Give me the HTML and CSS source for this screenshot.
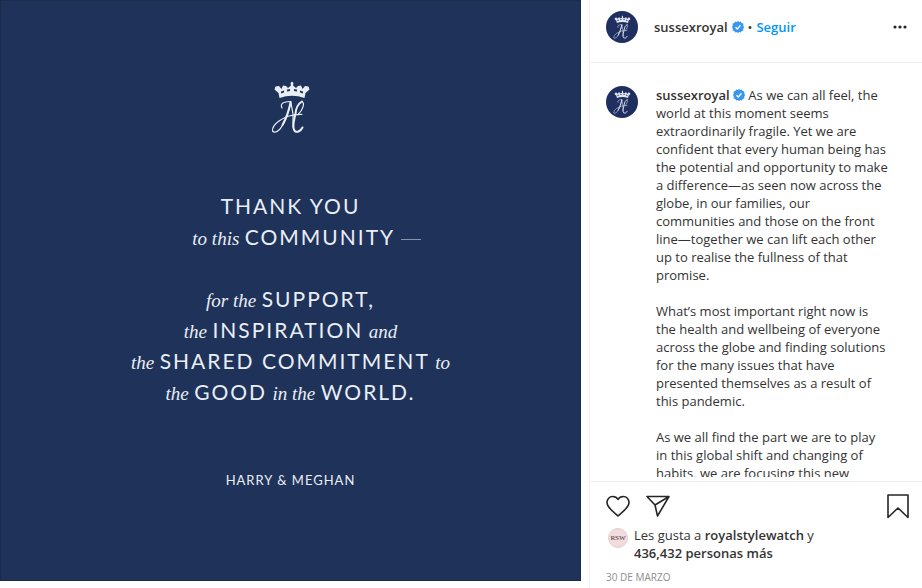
FILE: index.html
```html
<!DOCTYPE html>
<html lang="es">

<head>
    <meta charset="UTF-8">
    <meta name="viewport" content="width=device-width, initial-scale=1.0">
    <title>sussexroyal</title>
    <link rel="stylesheet" href="styles.css">
</head>

<body>

    <!-- shared icons -->
    <svg class="sprite" aria-hidden="true">
        <symbol id="monogram" viewBox="0 0 40 54">
            <path fill="currentColor" fill-rule="evenodd" d="M8.500 17L7.500 12L3.500 8.500L4.500 5.500L8 5L10.500 8L12 4.500L15 5L17 7L20 4.500L19.500 2L21 0.500L22.500 2L22 4.500L25 7L27 5L30 4.500L31.500 8L34 5L37.500 5.500L38.500 8.500L34.500 12L33.500 17Q21 12.500 8.500 17ZM10 10.500V12.500L13 11.500V9.500ZM16 8.500V10.500L19 10V8ZM23 8V10L26 10.500V8.500ZM29 9.500V11.500L32 12.500V10.500Z" />
            <g fill="none" stroke="currentColor" stroke-linecap="round" stroke-linejoin="round">
                <path stroke-width="1.200" d="M11 27Q9 23 13 21.500Q16 20.500 20 20.500C18 31 14 42 9 48Q4 53 1.500 50Q1 45 8 40Q18 33 31 33.500" />
                <path stroke-width="2" d="M19.500 21.500Q17 34 11.500 44" />
                <path stroke-width="1.200" d="M20 22L22 33V46" />
                <path stroke-width="2" d="M31 20.500Q25 24 24.500 33Q22 42 22.500 47Q23.500 52 27.500 50.500Q30 49.500 31.500 46.500" />
                <path stroke-width="1.200" d="M31 20.500C34 22 32 29 27 33.500" />
            </g>
        </symbol>
        <symbol id="verified" viewBox="0 0 24 24">
            <path fill="#3897f0" d="M12 0l2.500 2.200L17.700 1.200l1.500 3L22.700 5l-.2 3.500L24 12l-1.500 3.500.2 3.500-3.500.8-1.500 3-3.200-1L12 24l-2.500-2.200-3.200 1-1.500-3L1.300 19l.2-3.500L0 12l1.500-3.500L1.300 5l3.500-.8 1.500-3 3.200 1z" />
            <path fill="none" stroke="#fff" stroke-width="2.500" d="M7 12.500l3.500 3.500L17 8.500" />
        </symbol>
    </svg>

    <main class="post">
        <section class="media">
            <div class="poster">
                <svg class="crest" role="img" aria-label="Monogram"><use href="#monogram" /></svg>
                <div class="message">
                    <p><b>THANK YOU</b></p>
                    <p class="dashed"><i>to this</i> <b>COMMUNITY</b> <span class="dash"></span></p>
                </div>
                <div class="message">
                    <p><i>for the</i> <b>SUPPORT,</b></p>
                    <p><i>the</i> <b>INSPIRATION</b> <i>and</i></p>
                    <p><i>the</i> <b>SHARED COMMITMENT</b> <i>to</i></p>
                    <p><i>the</i> <b>GOOD</b> <i>in the</i> <b>WORLD.</b></p>
                </div>
                <p class="signature">HARRY &amp; MEGHAN</p>
            </div>
        </section>

        <article class="panel">
            <header class="panel-header">
                <a class="avatar" href="#" aria-label="sussexroyal"><svg><use href="#monogram" /></svg></a>
                <div class="account">
                    <a class="username" href="#">sussexroyal</a>
                    <svg class="badge" role="img" aria-label="Verificado"><use href="#verified" /></svg>
                    <span class="dot">•</span>
                    <button class="follow">Seguir</button>
                </div>
                <button class="icon-button more" aria-label="Más opciones">
                    <svg width="14" height="4" viewBox="0 0 14 4" fill="#262626">
                        <circle cx="2" cy="2" r="1.600" />
                        <circle cx="7" cy="2" r="1.600" />
                        <circle cx="12" cy="2" r="1.600" />
                    </svg>
                </button>
            </header>

            <div class="comments">
                <a class="avatar" href="#" aria-label="sussexroyal"><svg><use href="#monogram" /></svg></a>
                <div class="caption">
                    <p><a class="username" href="#">sussexroyal</a> <svg class="badge" role="img" aria-label="Verificado"><use href="#verified" /></svg> As we can all feel, the<br>
                        world at this moment seems<br>
                        extraordinarily fragile. Yet we are<br>
                        confident that every human being has<br>
                        the potential and opportunity to make<br>
                        a difference—as seen now across the<br>
                        globe, in our families, our<br>
                        communities and those on the front<br>
                        line—together we can lift each other<br>
                        up to realise the fullness of that<br>
                        promise.</p>
                    <p>What’s most important right now is<br>
                        the health and wellbeing of everyone<br>
                        across the globe and finding solutions<br>
                        for the many issues that have<br>
                        presented themselves as a result of<br>
                        this pandemic.</p>
                    <p>As we all find the part we are to play<br>
                        in this global shift and changing of<br>
                        habits, we are focusing this new</p>
                </div>
            </div>

            <footer class="panel-footer">
                <div class="actions">
                    <button class="icon-button" aria-label="Me gusta">
                        <svg width="24" height="24" viewBox="0 0 24 24">
                            <path d="M12 22C9 19 1 14 1 8.500C1 5 3.500 2.500 6.500 2.500C9 2.500 11 3.500 12 5.500C13 3.500 15 2.500 17.500 2.500C20.500 2.500 23 5 23 8.500C23 14 15 19 12 22Z" />
                        </svg>
                    </button>
                    <button class="icon-button" aria-label="Compartir">
                        <svg width="24" height="24" viewBox="0 0 24 24">
                            <path d="M1 2.500H23L11.500 22L9 11ZM9 11L23 2.500" />
                        </svg>
                    </button>
                    <button class="icon-button save" aria-label="Guardar">
                        <svg width="24" height="26" viewBox="0 0 24 26">
                            <path d="M2 2H22V24.500L12 15L2 24.500Z" />
                        </svg>
                    </button>
                </div>
                <div class="likes">
                    <span class="liker">RSW</span>
                    <p>Les gusta a <a class="username" href="#">royalstylewatch</a> y<br>
                        <a class="username" href="#">436,432 personas más</a></p>
                </div>
                <time class="date" datetime="2020-03-30">30 DE MARZO</time>
            </footer>
        </article>
    </main>

</body>

</html>
```

FILE: styles.css
```css
* {
    box-sizing: border-box;
}

body {
    margin: 0;
    background-color: #fff;
    color: #333;
    font-family: "Open Sans", "Noto Sans", sans-serif;
    font-size: 13px;
    line-height: 18px;
}

p {
    margin: 0;
}

a {
    color: inherit;
    text-decoration: none;
}

button {
    padding: 0;
    border: none;
    background: none;
    font: inherit;
    cursor: pointer;
}

.sprite {
    display: none;
}

.post {
    display: grid;
    grid-template-columns: 1fr 333px;
    height: 100vh;
}

/* picture side */
.media {
    padding-right: 8px;
}

.poster {
    display: flex;
    flex-direction: column;
    align-items: center;
    gap: 31px;
    aspect-ratio: 1;
    padding-top: 80px;
    background-color: #1f3259;
    border: 1px solid #1a2b4c;
    color: #e9eef5;
}

.crest {
    width: 40px;
    height: 54px;
    margin-bottom: 25px;
}

.message {
    font-size: 21px;
    line-height: 31px;
    text-align: center;
    white-space: nowrap;
}

.message b,
.message i {
    line-height: 1;
}

.message b {
    font-family: Lato, sans-serif;
    font-weight: 400;
    letter-spacing: 2px;
}

.message i {
    font-family: "Liberation Serif", serif;
    font-size: 19px;
}

.dashed {
    padding-left: 32px;
}

.dash {
    display: inline-block;
    width: 20px;
    height: 1px;
    background-color: #8694aa;
    vertical-align: middle;
}

.signature {
    margin-top: 32px;
    font-family: Lato, sans-serif;
    font-size: 13px;
    letter-spacing: 1px;
}

/* text side */
.panel {
    display: flex;
    flex-direction: column;
    min-height: 0;
    border-left: 1px solid #efefef;
}

.panel-header {
    display: flex;
    align-items: center;
    gap: 16px;
    padding: 11px 15px 19px 16px;
    border-bottom: 1px solid #efefef;
}

.avatar {
    display: flex;
    flex: none;
    align-items: center;
    justify-content: center;
    width: 32px;
    height: 32px;
    border-radius: 50%;
    background-color: #1f3060;
    color: #dfe5ee;
}

.avatar svg {
    width: 18px;
    height: 25px;
}

.account {
    display: flex;
    flex: 1;
    align-items: center;
    gap: 4px;
}

.username,
.follow {
    font-weight: 600;
}

.follow {
    color: #0095f6;
}

.badge {
    width: 12px;
    height: 12px;
    vertical-align: -1px;
}

.icon-button {
    display: flex;
}

.icon-button path {
    fill: none;
    stroke: #262626;
    stroke-width: 1.6;
    stroke-linejoin: round;
}

.comments {
    display: flex;
    flex: 1;
    gap: 18px;
    min-height: 0;
    margin-bottom: 4px;
    padding: 23px 16px 0;
    overflow: hidden;
}

.caption {
    white-space: nowrap;
}

.caption p {
    margin-bottom: 18px;
}

.panel-footer {
    padding: 11px 12px 2px 16px;
    border-top: 1px solid #efefef;
}

.actions {
    display: flex;
    align-items: center;
    gap: 16px;
}

.save {
    margin-left: auto;
}

.likes {
    display: flex;
    gap: 6px;
    margin: 7px 0 6px 2px;
}

.liker {
    width: 20px;
    height: 20px;
    margin-top: 2px;
    border: 1px solid #e3cfd1;
    border-radius: 50%;
    background-color: #f3dcdd;
    font-family: "Liberation Serif", serif;
    font-size: 7px;
    text-align: center;
}

.date {
    display: block;
    color: #8e8e8e;
    font-size: 10px;
}
```
